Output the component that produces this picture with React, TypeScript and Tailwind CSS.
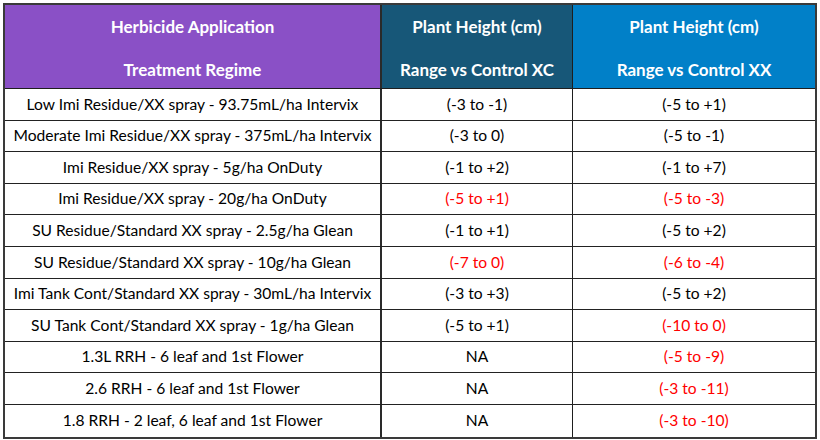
import React from "react";

type Row = { name: string; xc: string; xcRed?: boolean; xx: string; xxRed?: boolean };

const rows: Row[] = [
  { name: "Low Imi Residue/XX spray - 93.75mL/ha Intervix", xc: "(-3 to -1)", xx: "(-5 to +1)" },
  { name: "Moderate Imi Residue/XX spray - 375mL/ha Intervix", xc: "(-3 to 0)", xx: "(-5 to -1)" },
  { name: "Imi Residue/XX spray - 5g/ha OnDuty", xc: "(-1 to +2)", xx: "(-1 to +7)" },
  { name: "Imi Residue/XX spray - 20g/ha OnDuty", xc: "(-5 to +1)", xcRed: true, xx: "(-5 to -3)", xxRed: true },
  { name: "SU Residue/Standard XX spray - 2.5g/ha Glean", xc: "(-1 to +1)", xx: "(-5 to +2)" },
  { name: "SU Residue/Standard XX spray - 10g/ha Glean", xc: "(-7 to 0)", xcRed: true, xx: "(-6 to -4)", xxRed: true },
  { name: "Imi Tank Cont/Standard XX spray - 30mL/ha Intervix", xc: "(-3 to +3)", xx: "(-5 to +2)" },
  { name: "SU Tank Cont/Standard XX spray - 1g/ha Glean", xc: "(-5 to +1)", xx: "(-10 to 0)", xxRed: true },
  { name: "1.3L RRH - 6 leaf and 1st Flower", xc: "NA", xx: "(-5 to -9)", xxRed: true },
  { name: "2.6 RRH - 6 leaf and 1st Flower", xc: "NA", xx: "(-3 to -11)", xxRed: true },
  { name: "1.8 RRH - 2 leaf, 6 leaf and 1st Flower", xc: "NA", xx: "(-3 to -10)", xxRed: true },
];

export default function App() {
  return (
    <div className="w-[820px] h-[440px] bg-white pt-[3px] pl-[3px]" style={{ fontFamily: "Lato, 'Open Sans', sans-serif" }}>
      <div className="w-[814px] border-2 border-[#3a3a3a]">
        <div className="flex h-[84px] border-b border-[#1e1e1e] font-bold text-white text-[17px] leading-[43px]">
          <div className="w-[377px] border-r-2 border-[#2a2a2a] bg-[#8a50c6] flex flex-col items-center justify-center pt-[2px]">
            <div>Herbicide Application</div>
            <div>Treatment Regime</div>
          </div>
          <div className="w-[191px] border-r border-[#1e1e1e] bg-[#175778] flex flex-col items-center justify-center pt-[2px]">
            <div>Plant Height (cm)</div>
            <div>Range vs Control XC</div>
          </div>
          <div className="flex-1 bg-[#0180c8] flex flex-col items-center justify-center pt-[2px]">
            <div>Plant Height (cm)</div>
            <div>Range vs Control XX</div>
          </div>
        </div>
        {rows.map((r, i) => (
          <div
            key={i}
            className={`flex h-[31.6px] text-[15.6px] text-black ${i < rows.length - 1 ? "border-b border-[#222]" : ""}`}
          >
            <div className="w-[377px] border-r-2 border-[#2a2a2a] flex items-center justify-center whitespace-nowrap">
              {r.name}
            </div>
            <div className={`w-[191px] border-r border-[#1e1e1e] flex items-center justify-center ${r.xcRed ? "text-[#ff0000]" : ""}`}>
              {r.xc}
            </div>
            <div className={`flex-1 flex items-center justify-center ${r.xxRed ? "text-[#ff0000]" : ""}`}>
              {r.xx}
            </div>
          </div>
        ))}
      </div>
    </div>
  );
}
